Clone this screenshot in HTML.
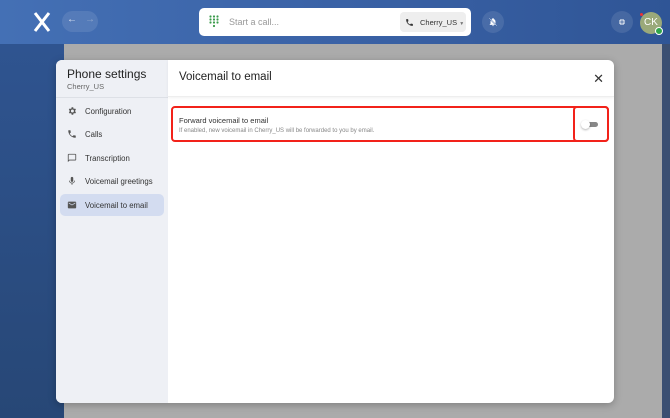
<!DOCTYPE html>
<html><head><meta charset="utf-8"><style>
*{box-sizing:border-box;margin:0;padding:0}
body{width:670px;height:418px;overflow:hidden;position:relative;font-family:"Liberation Sans",sans-serif;background:#a9a9a9}
.top{position:absolute;left:0;top:0;width:670px;height:44px;background:linear-gradient(90deg,#4470b5,#3a62a6 50%,#2f5596)}
.side{position:absolute;left:0;top:44px;width:64px;height:374px;background:linear-gradient(180deg,#2f5490,#274776)}
.grey{position:absolute;left:64px;top:44px;width:600px;height:374px;background:#ababab}
.rightedge{position:absolute;left:662px;top:44px;width:8px;height:374px;background:#3b4f72}
.modal{position:absolute;left:56px;top:60px;width:558px;height:343px;background:#fff;border-radius:6px;overflow:hidden;box-shadow:0 2px 8px rgba(0,0,0,.25)}
.nav{position:absolute;left:0;top:0;width:112px;height:343px;background:#eef0f5}
.nav h1{font-size:12px;font-weight:normal;color:#222;position:absolute;left:11px;top:7px}
.nav .sub{font-size:7.5px;color:#666;position:absolute;left:11px;top:22px}
.navsep{position:absolute;left:0;top:37px;width:112px;height:1px;background:#dde0e6}
.item{position:absolute;left:4px;width:104px;height:22px;font-size:7.8px;color:#333;display:flex;align-items:center;padding-left:7px;border-radius:5px}
.item svg{width:10px;height:10px;margin-right:8px;fill:#555}
.item.sel{background:#d3dcf0}
.hdr{position:absolute;left:112px;top:0;width:446px;height:37px;border-bottom:1px solid #eee;box-shadow:0 1px 3px rgba(0,0,0,.06)}
.hdr h2{font-size:11.5px;font-weight:normal;color:#222;position:absolute;left:11px;top:11px}
.x{position:absolute;right:10px;top:11px;font-size:13px;color:#333}
.red{position:absolute;left:115px;top:46px;width:438px;height:36px;border:2px solid #f2221a;border-radius:4px}
.red2{position:absolute;left:517px;top:46px;width:36px;height:36px;border:2px solid #f2221a;border-radius:4px}
.t1{position:absolute;left:123px;top:56px;font-size:7.5px;color:#333}
.t2{position:absolute;left:123px;top:68px;font-size:6px;color:#888}
.tog{position:absolute;left:530px;top:62px;width:12px;height:5px;background:#888;border-radius:3px}
.knob{position:absolute;left:525px;top:60px;width:9px;height:9px;background:#fff;border-radius:50%;box-shadow:0 1px 2px rgba(0,0,0,.3)}
.search{position:absolute;left:199px;top:8px;width:272px;height:28px;background:#fff;border-radius:5px}
.search .ph{position:absolute;left:30px;top:9px;font-size:9px;color:#999}
.acct{position:absolute;left:201px;top:4px;width:66px;height:20px;background:#eeeeee;border-radius:4px;font-size:7.5px;color:#333;padding:6px 0 0 20px}
.circ{position:absolute;border-radius:50%;background:rgba(255,255,255,.1)}
</style></head><body>
<div class="top"></div>
<div class="side"></div>
<div class="grey"></div>
<div class="rightedge"></div>
<svg style="position:absolute;left:33px;top:12px" width="18" height="20" viewBox="0 0 18 20"><path d="M2 1 L9 10 L2 19 M16 1 L9 10 L16 19" stroke="#fff" stroke-width="3" fill="none"/></svg>
<div style="position:absolute;left:62px;top:11px;width:36px;height:21px;border-radius:11px;background:rgba(255,255,255,.1)"></div>
<div style="position:absolute;left:67px;top:14px;font-size:10px;color:#dfe6f3">←</div>
<div style="position:absolute;left:85px;top:14px;font-size:10px;color:#8fa6cc">→</div>
<div class="search">
<svg style="position:absolute;left:10px;top:7px" width="10" height="14"><g fill="#3a9a4a"><circle cx="1.5" cy="1.5" r="1.1"/><circle cx="5" cy="1.5" r="1.1"/><circle cx="8.5" cy="1.5" r="1.1"/><circle cx="1.5" cy="4.5" r="1.1"/><circle cx="5" cy="4.5" r="1.1"/><circle cx="8.5" cy="4.5" r="1.1"/><circle cx="1.5" cy="7.5" r="1.1"/><circle cx="5" cy="7.5" r="1.1"/><circle cx="8.5" cy="7.5" r="1.1"/><circle cx="5" cy="11" r="1.1"/></g></svg>
<div class="ph">Start a call...</div>
<div class="acct">Cherry_US <span style="font-size:5px;color:#777">▼</span>
<svg style="position:absolute;left:5px;top:6px" width="9" height="9" viewBox="0 0 24 24"><path fill="#333" d="M6.6 10.8c1.4 2.8 3.8 5.1 6.6 6.6l2.2-2.2c.3-.3.7-.4 1-.2 1.1.4 2.3.6 3.6.6.6 0 1 .4 1 1V20c0 .6-.4 1-1 1C10.6 21 3 13.4 3 4c0-.6.4-1 1-1h3.5c.6 0 1 .4 1 1 0 1.3.2 2.5.6 3.6.1.3 0 .7-.2 1z"/></svg></div>
</div>
<div class="circ" style="left:482px;top:11px;width:22px;height:22px"></div>
<svg style="position:absolute;left:488px;top:17px" width="10" height="10" viewBox="0 0 24 24"><path fill="#fff" d="M12 22a2 2 0 002-2h-4a2 2 0 002 2zm6-6v-5c0-3.1-1.6-5.6-4.5-6.3V4a1.5 1.5 0 00-3 0v.7C7.6 5.4 6 7.9 6 11v5l-2 2v1h16v-1z"/><path d="M3 3l18 18" stroke="#3a62a6" stroke-width="2.5"/><path d="M3 3l18 18" stroke="#fff" stroke-width="1.2"/></svg>
<div class="circ" style="left:611px;top:11px;width:22px;height:22px"></div>
<svg style="position:absolute;left:618px;top:18px" width="8" height="8" viewBox="0 0 8 8"><path d="M1 3h2V1M5 1v2h2M1 5h2v2M7 5H5v2" stroke="#fff" stroke-width="1" fill="none"/></svg>
<div style="position:absolute;left:640px;top:12px;width:22px;height:22px;border-radius:50%;background:#9aa97a;color:#fff;font-size:10px;text-align:center;line-height:22px">CK</div>
<div style="position:absolute;left:655px;top:27px;width:8px;height:8px;border-radius:50%;background:#2fa54a;border:1.5px solid #fff"></div>
<div style="position:absolute;left:640px;top:13px;width:3px;height:3px;border-radius:50%;background:#e33"></div>

<div class="modal">
<div class="nav">
<h1>Phone settings</h1><div class="sub">Cherry_US</div>
<div class="navsep"></div>
<div class="item" style="top:40px"><svg viewBox="0 0 24 24"><path d="M19.4 13a7.5 7.5 0 000-2l2.1-1.6-2-3.5-2.5 1a7.3 7.3 0 00-1.7-1L15 3h-4l-.4 2.9a7.3 7.3 0 00-1.7 1l-2.5-1-2 3.5L6.6 11a7.5 7.5 0 000 2l-2.1 1.6 2 3.5 2.5-1c.5.4 1.1.7 1.7 1L11 21h4l.4-2.9c.6-.3 1.2-.6 1.700-1l2.5 1 2-3.5zM13 15.5a3.5 3.5 0 110-7 3.5 3.5 0 010 7z"/></svg>Configuration</div>
<div class="item" style="top:63px"><svg viewBox="0 0 24 24"><path d="M6.6 10.8c1.4 2.8 3.8 5.1 6.6 6.6l2.2-2.2c.3-.3.7-.4 1-.2 1.1.4 2.3.6 3.6.6.6 0 1 .4 1 1V20c0 .6-.4 1-1 1C10.6 21 3 13.4 3 4c0-.6.4-1 1-1h3.5c.6 0 1 .4 1 1 0 1.3.2 2.5.6 3.6.1.3 0 .7-.2 1z"/></svg>Calls</div>
<div class="item" style="top:87px"><svg viewBox="0 0 24 24"><path d="M20 2H4a2 2 0 00-2 2v18l4-4h14a2 2 0 002-2V4a2 2 0 00-2-2zm0 14H5.2L4 17.2V4h16z"/></svg>Transcription</div>
<div class="item" style="top:110px"><svg viewBox="0 0 24 24"><path d="M12 14a3 3 0 003-3V5a3 3 0 00-6 0v6a3 3 0 003 3zm5.3-3A5.3 5.3 0 0112 16a5.3 5.3 0 01-5.3-5H5c0 3.4 2.7 6.2 6 6.7V21h2v-3.3c3.3-.5 6-3.3 6-6.7z"/></svg>Voicemail greetings</div>
<div class="item sel" style="top:134px"><svg viewBox="0 0 24 24"><path d="M20 4H4a2 2 0 00-2 2v12a2 2 0 002 2h16a2 2 0 002-2V6a2 2 0 00-2-2zm0 4l-8 5-8-5V6l8 5 8-5z"/></svg>Voicemail to email</div>
</div>
<div class="hdr"><h2>Voicemail to email</h2><div class="x">✕</div></div>
<div class="red"></div><div class="red2"></div>
<div class="t1">Forward voicemail to email</div>
<div class="t2">If enabled, new voicemail in Cherry_US will be forwarded to you by email.</div>
<div class="tog"></div><div class="knob"></div>
</div>
</body></html>
